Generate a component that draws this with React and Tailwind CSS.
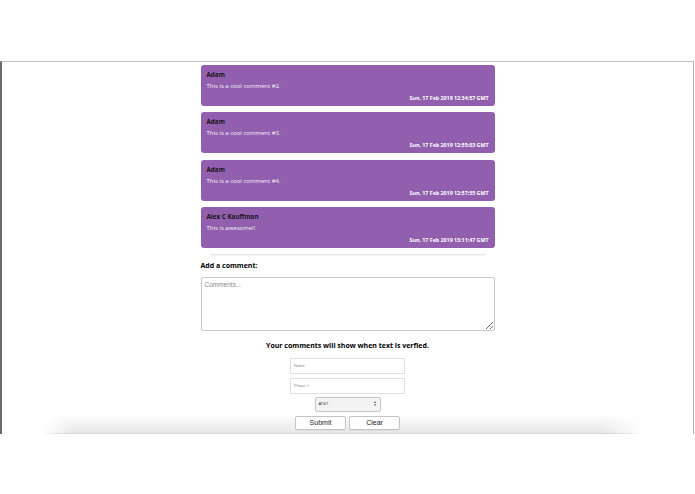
import { useState } from 'react';

const comments = [
  { name: 'Adam', text: 'This is a cool comment #2.', date: 'Sun, 17 Feb 2019 12:34:57 GMT' },
  { name: 'Adam', text: 'This is a cool comment #3.', date: 'Sun, 17 Feb 2019 12:55:03 GMT' },
  { name: 'Adam', text: 'This is a cool comment #4.', date: 'Sun, 17 Feb 2019 12:57:55 GMT' },
  { name: 'Alex C Kauffman', text: 'This is awesome!!', date: 'Sun, 17 Feb 2019 13:11:47 GMT' },
];

function CommentCard({ c }) {
  return (
    <div className="h-[41px] rounded-[3px] bg-[#915fae] px-[6px] pt-[5px]">
      <p className="text-[6.3px] font-bold leading-[9px] text-[#1b1320]">{c.name}</p>
      <p className="mt-[3px] text-[6px] leading-[9px] text-[#f6f0f9]">{c.text}</p>
      <p className="mt-[3px] text-right text-[5.3px] font-bold leading-[8px] text-white">{c.date}</p>
    </div>
  );
}

export default function App() {
  const [comment, setComment] = useState('');
  const [name, setName] = useState('');
  const [phone, setPhone] = useState('');

  return (
    <div className="h-[494px] w-[695px] overflow-hidden bg-white pt-[61px] font-['Open_Sans',sans-serif]">
      <div className="relative h-[373px] w-[694px] border-t border-l-2 border-r border-t-[#bdbdbd] border-l-[#6b6b6b] border-r-[#b0b0b0]">
        {/* bottom shadow */}
        <div className="absolute bottom-0 left-[40px] right-[50px] h-[20px] bg-[linear-gradient(to_bottom,rgba(255,255,255,0),#e6e6e6)] [mask-image:linear-gradient(to_right,transparent,black_30px,black_calc(100%-40px),transparent)]" />
        <div className="absolute bottom-0 left-[40px] right-[50px] h-px bg-[#d4d4d4] [mask-image:linear-gradient(to_right,transparent,black_30px,black_calc(100%-40px),transparent)]" />

        <div className="relative flex flex-col items-center pt-[3px]">
          <div className="flex w-[294px] flex-col gap-[6.3px]">
            {comments.map((c) => (
              <CommentCard key={c.date} c={c} />
            ))}
          </div>

          <div className="mt-[6px] h-px w-[275px] bg-[#e4e4e4] shadow-[0_1px_1px_rgba(0,0,0,0.05)]" />

          <div className="mt-[6px] w-[294px]">
            <p className="text-[7px] font-bold leading-[10px] text-black">Add a comment:</p>
            <textarea
              value={comment}
              onChange={(e) => setComment(e.target.value)}
              placeholder="Comments..."
              className="mt-[6px] block h-[54px] w-[294px] resize-y rounded-[2px] border border-[#c8c8c8] px-[3px] py-[2px] font-['Liberation_Sans',sans-serif] text-[6.5px] leading-[9px] placeholder:text-[#8a8a8a]"
            />
          </div>

          <p className="mt-[10px] text-[7px] font-bold leading-[10px] text-black">
            Your comments will show when text is verfied.
          </p>

          <input
            value={name}
            onChange={(e) => setName(e.target.value)}
            placeholder="Name"
            className="mt-[7px] h-[16px] w-[115px] border border-[#e0e0e0] px-[3px] font-['Liberation_Sans',sans-serif] text-[4px] placeholder:text-[#8a8a8a]"
          />
          <input
            value={phone}
            onChange={(e) => setPhone(e.target.value)}
            placeholder="Phone #"
            className="mt-[4px] h-[16px] w-[115px] border border-[#e0e0e0] px-[3px] font-['Liberation_Sans',sans-serif] text-[4px] placeholder:text-[#8a8a8a]"
          />

          <div className="mt-[3px] flex h-[15px] w-[66px] items-center justify-between rounded-[2px] border border-[#c4c4c4] bg-[#f3f3f3] px-[3px] font-['Liberation_Sans',sans-serif] text-[4px] text-[#333]">
            <span>AT&amp;T</span>
            <span className="flex flex-col text-[3px] leading-[3px]">
              <span>▲</span>
              <span>▼</span>
            </span>
          </div>

          <div className="mt-[4px] flex gap-[3px]">
            <button className="h-[14px] w-[51px] rounded-[2px] border border-[#c4c4c4] bg-white font-['Liberation_Sans',sans-serif] text-[7px] leading-none text-[#222] shadow-[0_1px_0_rgba(0,0,0,0.05)]">
              Submit
            </button>
            <button className="h-[14px] w-[51px] rounded-[2px] border border-[#c4c4c4] bg-white font-['Liberation_Sans',sans-serif] text-[7px] leading-none text-[#222] shadow-[0_1px_0_rgba(0,0,0,0.05)]">
              Clear
            </button>
          </div>
        </div>
      </div>
    </div>
  );
}
